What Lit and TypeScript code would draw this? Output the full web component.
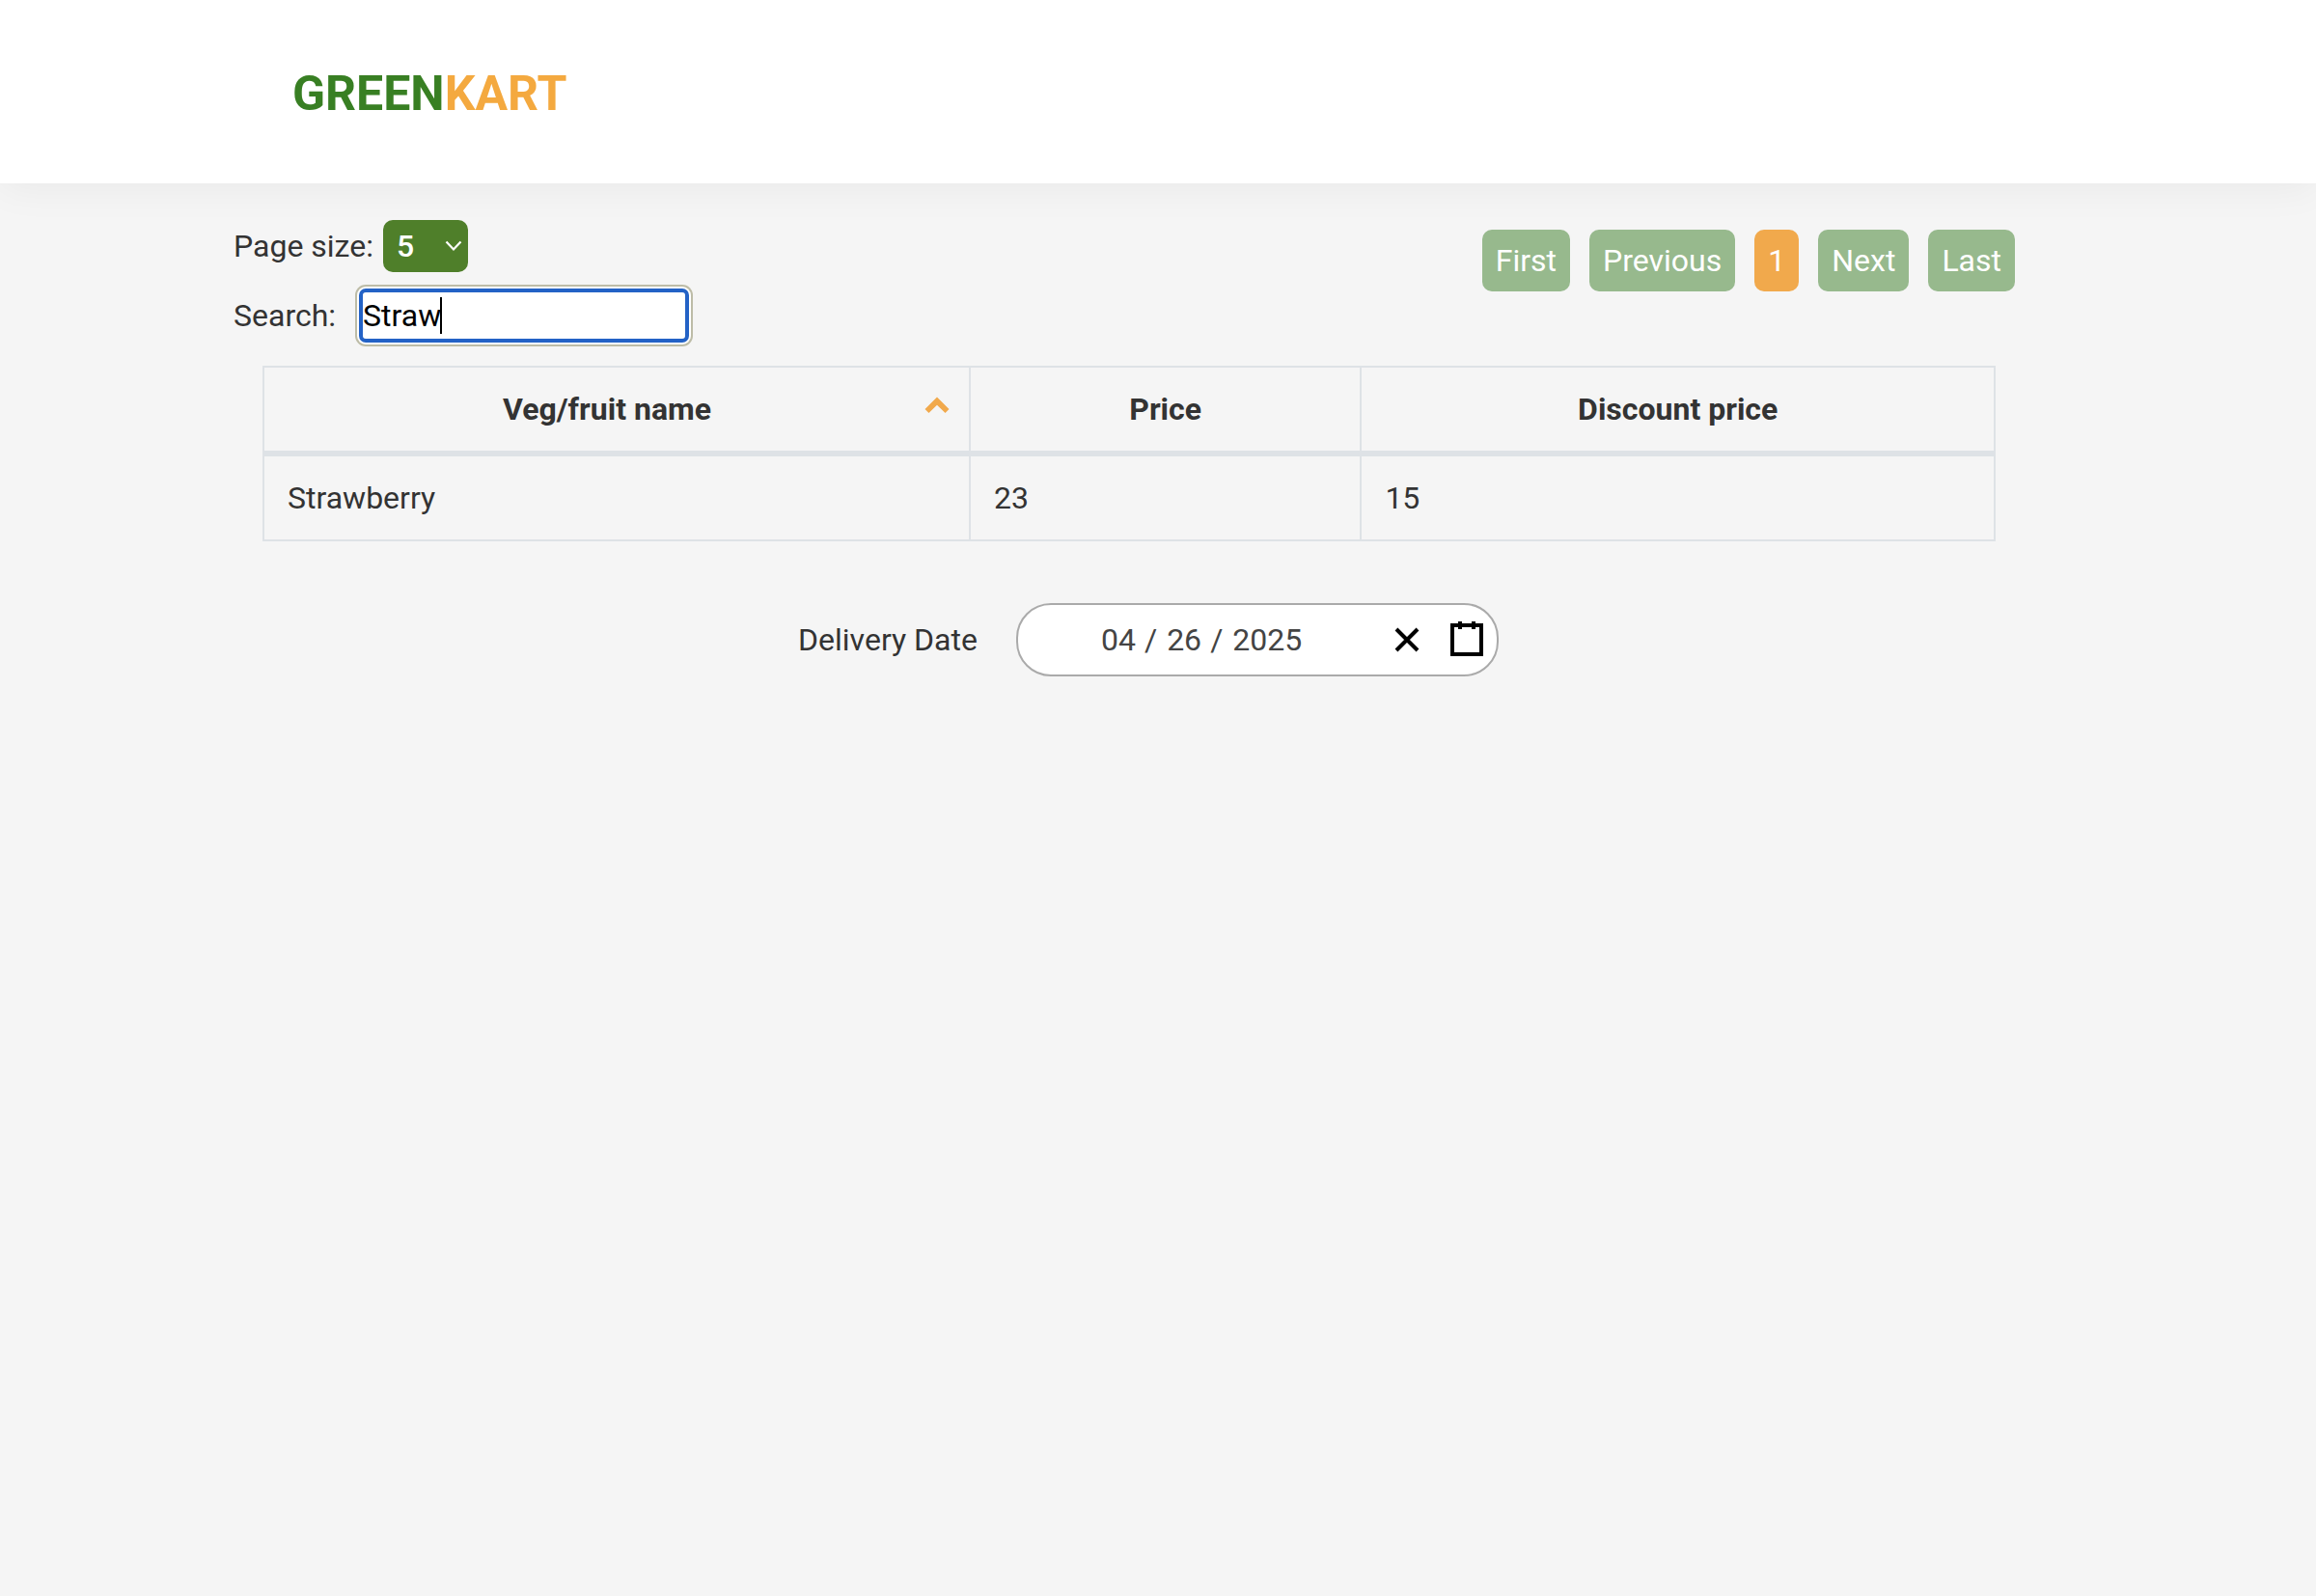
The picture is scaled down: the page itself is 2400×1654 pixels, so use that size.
import { LitElement, html, css } from "lit";
import { customElement, state } from "lit/decorators.js";

interface Offer {
  name: string;
  price: number;
  discount: number;
}

const OFFERS: Offer[] = [{ name: "Strawberry", price: 23, discount: 15 }];

@customElement("app-root")
export class AppRoot extends LitElement {
  static styles = css`
    :host {
      display: block;
      min-height: 100vh;
      background: #f5f5f5;
      color: #333;
      font-family: Roboto, "Liberation Sans", sans-serif;
      font-size: 32px;
      line-height: 38px;
    }
    * {
      box-sizing: border-box;
    }
    input,
    select,
    button {
      font: inherit;
      margin: 0;
      border: 0;
    }
    .header {
      display: flex;
      align-items: center;
      height: 190px;
      padding: 4px 303px 0;
      background: #fff;
      box-shadow: 0 4px 40px rgba(0, 0, 0, 0.055);
    }
    .logo {
      color: #387f23;
      font-size: 50px;
      line-height: 60px;
      font-weight: 700;
      text-decoration: none;
    }
    .logo-accent {
      color: #f4a93f;
    }
    .main {
      padding: 38px 312px 0 242px;
    }
    .toolbar {
      display: flex;
      justify-content: space-between;
      align-items: flex-start;
    }
    .controls {
      display: grid;
      gap: 17px;
    }
    .control {
      display: flex;
      align-items: center;
    }
    .size {
      gap: 10px;
    }
    .search {
      gap: 24px;
    }
    .select-box,
    .search-box {
      position: relative;
      display: flex;
    }
    .select {
      appearance: none;
      width: 88px;
      height: 54px;
      padding: 0 14px;
      border-radius: 10px;
      background: #4f7f2a;
      color: #fff;
      font-weight: 500;
    }
    .chevron {
      position: absolute;
      right: 6px;
      top: 21px;
      width: 18px;
      height: 12px;
      pointer-events: none;
    }
    .search-input {
      width: 342px;
      height: 56px;
      padding: 0;
      border: 4px solid #2362c6;
      border-radius: 7px;
      background: #fff;
      color: #000;
      outline: 0;
      box-shadow: 0 0 0 2px #fff, 0 0 0 4px #bdbca7;
    }
    .caret {
      position: absolute;
      left: 84px;
      top: 9px;
      width: 2px;
      height: 38px;
      background: #000;
    }
    .pagination {
      display: flex;
      gap: 20px;
      padding-top: 10px;
    }
    .page {
      height: 64px;
      padding: 0 14px;
      border-radius: 10px;
      background: #97b98d;
      color: #fff;
    }
    .page-current {
      background: #f1a94c;
    }
    .table-wrap {
      padding: 24px 20px 0 30px;
    }
    .table {
      width: 100%;
      table-layout: fixed;
      border-collapse: collapse;
    }
    .name-col {
      width: 40.8%;
    }
    .price-col {
      width: 22.6%;
    }
    .head,
    .cell {
      padding: 24px;
      border: 2px solid #dee2e6;
      text-align: left;
    }
    .head {
      border-bottom-width: 6px;
      text-align: center;
    }
    .head-sorted {
      padding-right: 44px;
    }
    .head-inner {
      position: relative;
    }
    .sort {
      position: absolute;
      right: -24px;
      top: 6px;
      width: 26px;
      height: 18px;
    }
    .delivery {
      display: flex;
      justify-content: center;
      align-items: center;
      gap: 40px;
      padding: 64px 0 0 50px;
    }
    .picker {
      display: flex;
      align-items: center;
      width: 500px;
      height: 76px;
      padding: 0 12px 0 86px;
      border: 2px solid #aaa;
      border-radius: 36px;
      background: #fff;
      color: #444;
    }
    .date-fields {
      display: flex;
      flex: 1;
    }
    .date-input {
      width: 36px;
      padding: 0;
      background: none;
      color: inherit;
      outline: 0;
    }
    .year-input {
      width: 72px;
    }
    .slash {
      padding: 0 10px 0 9px;
    }
    .actions {
      display: flex;
      gap: 24px;
    }
    .icon-button {
      display: flex;
      padding: 0;
      background: none;
    }
    .icon {
      width: 38px;
      height: 38px;
      fill: none;
      stroke: #000;
      stroke-width: 4;
    }
  `;

  @state() private query = "Straw";

  private onSearch(e: Event) {
    this.query = (e.target as HTMLInputElement).value;
  }

  render() {
    const rows = OFFERS.filter((o) =>
      o.name.toLowerCase().includes(this.query.toLowerCase())
    );
    return html`
      <header class="header">
        <a class="logo" href="#">GREEN<span class="logo-accent">KART</span></a>
      </header>
      <main class="main">
        <div class="toolbar">
          <div class="controls">
            <div class="control size">
              <label for="page-size">Page size:</label>
              <span class="select-box">
                <select class="select" id="page-size">
                  <option selected>5</option>
                  <option>10</option>
                  <option>20</option>
                </select>
                <svg class="chevron" viewBox="0 0 18 12" aria-hidden="true">
                  <path d="M1.5 1.5 9 9.5l7.500-8" fill="none" stroke="#fff" stroke-width="2.200" />
                </svg>
              </span>
            </div>
            <div class="control search">
              <label for="search">Search:</label>
              <span class="search-box">
                <input class="search-input" id="search" type="text" .value=${this.query} @input=${this.onSearch} />
                <span class="caret"></span>
              </span>
            </div>
          </div>
          <nav class="pagination" aria-label="Pages">
            <button class="page" type="button">First</button>
            <button class="page" type="button">Previous</button>
            <button class="page page-current" type="button">1</button>
            <button class="page" type="button">Next</button>
            <button class="page" type="button">Last</button>
          </nav>
        </div>
        <div class="table-wrap">
          <table class="table">
            <colgroup>
              <col class="name-col" />
              <col class="price-col" />
              <col />
            </colgroup>
            <thead>
              <tr>
                <th class="head head-sorted" scope="col" aria-sort="ascending">
                  <div class="head-inner">
                    Veg/fruit name
                    <svg class="sort" viewBox="0 0 26 18" aria-hidden="true">
                      <path d="M13 .5 25.500 13l-4 4L13 8.700 4.500 17l-4-4z" fill="#f1a94c" />
                    </svg>
                  </div>
                </th>
                <th class="head" scope="col">Price</th>
                <th class="head" scope="col">Discount price</th>
              </tr>
            </thead>
            <tbody>
              ${rows.map(
                (o) => html`<tr>
                  <td class="cell">${o.name}</td>
                  <td class="cell">${o.price}</td>
                  <td class="cell">${o.discount}</td>
                </tr>`
              )}
            </tbody>
          </table>
        </div>
        <div class="delivery">
          <label for="month">Delivery Date</label>
          <div class="picker">
            <div class="date-fields">
              <input class="date-input" id="month" aria-label="Month" value="04" />
              <span class="slash">/</span>
              <input class="date-input" aria-label="Day" value="26" />
              <span class="slash">/</span>
              <input class="date-input year-input" aria-label="Year" value="2025" />
            </div>
            <div class="actions">
              <button class="icon-button" type="button" aria-label="Clear date">
                <svg class="icon" viewBox="0 0 38 38"><path d="M8 8l22 22M30 8 8 30" /></svg>
              </button>
              <button class="icon-button" type="button" aria-label="Open calendar">
                <svg class="icon" viewBox="0 0 38 38">
                  <path d="M4 4h30v30H4zM12 0v8M26 0v8" />
                </svg>
              </button>
            </div>
          </div>
        </div>
      </main>
    `;
  }
}
